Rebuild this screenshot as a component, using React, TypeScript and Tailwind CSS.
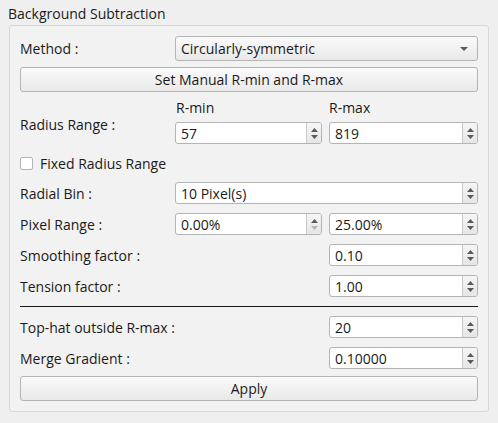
import React from "react";

const font = { fontFamily: '"Open Sans", "Noto Sans", sans-serif' };

function Arrows({ downDisabled = false }: { downDisabled?: boolean }) {
  return (
    <div className="flex h-full w-[15px] flex-col items-center justify-center gap-[3px] border-l border-[#c9c9c9] bg-gradient-to-b from-[#f6f6f6] to-[#e6e6e6]">
      <svg width="7" height="4" viewBox="0 0 7 4">
        <path d="M0 4 L3.5 0 L7 4 Z" fill="#5a5a5a" />
      </svg>
      <svg width="7" height="4" viewBox="0 0 7 4">
        <path d="M0 0 L3.5 4 L7 0 Z" fill={downDisabled ? "#b5b5b5" : "#5a5a5a"} />
      </svg>
    </div>
  );
}

function Spin({ value, w, downDisabled }: { value: string; w: string; downDisabled?: boolean }) {
  return (
    <div className={`flex h-[22px] ${w} items-stretch overflow-hidden rounded-[3px] border border-[#b4b4b4] bg-white`}>
      <div className="flex flex-1 items-center pl-[5px] text-[14px] text-[#1a1a1a]">{value}</div>
      <Arrows downDisabled={downDisabled} />
    </div>
  );
}

function Btn({ children }: { children: React.ReactNode }) {
  return (
    <div className="flex h-[25px] w-[458px] items-center justify-center rounded-[3px] border border-[#b4b4b4] bg-gradient-to-b from-[#fafafa] to-[#e9e9e9] text-[14px] text-[#1a1a1a]">
      {children}
    </div>
  );
}

function Row({ label, children, mt }: { label: string; children: React.ReactNode; mt: string }) {
  return (
    <div className={`flex h-[22px] items-center ${mt}`}>
      <div className="w-[155px] text-[14px] text-[#1a1a1a] whitespace-nowrap">{label}</div>
      {children}
    </div>
  );
}

export default function App() {
  return (
    <div className="h-[423px] w-[498px] bg-[#efefef] pl-[9px] pt-[4px]" style={font}>
      <div className="-ml-[1px] text-[14px] leading-[19px] text-[#1a1a1a]">Background Subtraction</div>
      <div className="mt-[2px] h-[387px] w-[480px] rounded-[3px] border border-[#d8d8d8] bg-[#f2f2f2] pl-[10px] pt-[10px]">
        <div className="flex h-[25px] items-center">
          <div className="w-[155px] text-[14px] text-[#1a1a1a]">Method :</div>
          <div className="flex h-[25px] w-[303px] items-center justify-between rounded-[3px] border border-[#b4b4b4] bg-gradient-to-b from-[#fafafa] to-[#e9e9e9] pl-[5px] pr-[9px] text-[14px] text-[#1a1a1a]">
            <span>Circularly-symmetric</span>
            <svg width="8" height="4" viewBox="0 0 8 4">
              <path d="M0 0 L4 4 L8 0 Z" fill="#5a5a5a" />
            </svg>
          </div>
        </div>
        <div className="mt-[6px]">
          <Btn>Set Manual R-min and R-max</Btn>
        </div>
        <div className="mt-[6px] flex h-[46px]">
          <div className="flex w-[155px] items-center pt-[6px] text-[14px] text-[#1a1a1a]">Radius Range :</div>
          <div className="flex flex-col">
            <div className="flex h-[18px] items-center text-[14px] text-[#1a1a1a]">
              <div className="w-[154px] pl-[1px]">R-min</div>
              <div className="w-[149px]">R-max</div>
            </div>
            <div className="mt-[6px] flex gap-[7px]">
              <Spin value="57" w="w-[147px]" />
              <Spin value="819" w="w-[149px]" />
            </div>
          </div>
        </div>
        <div className="mt-[13px] flex h-[13px] items-center">
          <div className="h-[13px] w-[13px] rounded-[2px] border border-[#b4b4b4] bg-white" />
          <div className="ml-[7px] text-[14px] text-[#1a1a1a]">Fixed Radius Range</div>
        </div>
        <Row label="Radial Bin :" mt="mt-[12px]">
          <Spin value="10 Pixel(s)" w="w-[303px]" />
        </Row>
        <Row label="Pixel Range :" mt="mt-[9px]">
          <div className="flex gap-[7px]">
            <Spin value="0.00%" w="w-[147px]" downDisabled />
            <Spin value="25.00%" w="w-[149px]" />
          </div>
        </Row>
        <Row label="Smoothing factor :" mt="mt-[9px]">
          <div className="ml-[154px]">
            <Spin value="0.10" w="w-[149px]" />
          </div>
        </Row>
        <Row label="Tension factor :" mt="mt-[9px]">
          <div className="ml-[154px]">
            <Spin value="1.00" w="w-[149px]" />
          </div>
        </Row>
        <div className="mt-[9px] h-[1px] w-[458px] bg-[#1a1a1a]" />
        <Row label="Top-hat outside R-max :" mt="mt-[9px]">
          <div className="ml-[154px]">
            <Spin value="20" w="w-[149px]" />
          </div>
        </Row>
        <Row label="Merge Gradient :" mt="mt-[9px]">
          <div className="ml-[154px]">
            <Spin value="0.10000" w="w-[149px]" />
          </div>
        </Row>
        <div className="mt-[7px]">
          <Btn>Apply</Btn>
        </div>
      </div>
    </div>
  );
}
